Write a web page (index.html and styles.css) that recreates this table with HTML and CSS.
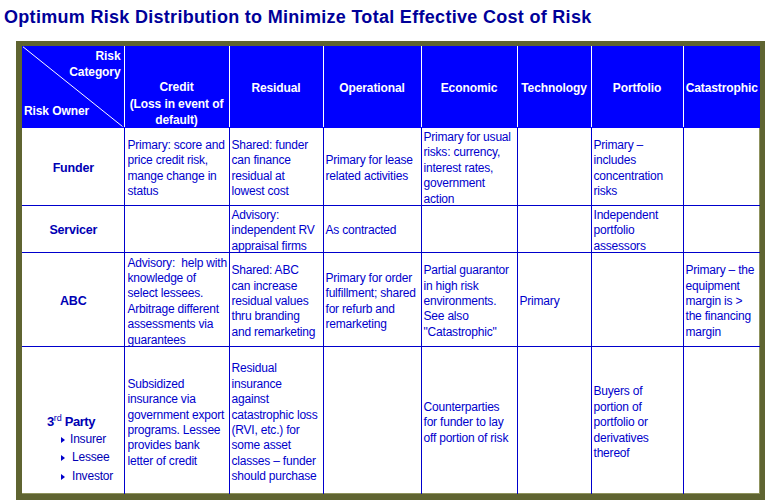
FILE: index.html
```html
<!DOCTYPE html>
<html>
<head>
<meta charset="utf-8">
<link rel="stylesheet" href="styles.css">
</head>
<body>
<h1 class="title">Optimum Risk Distribution to Minimize Total Effective Cost of Risk</h1>
<div class="frame">
<table class="grid">
<colgroup>
<col class="c0"><col class="c1"><col class="c2"><col class="c3"><col class="c4"><col class="c5"><col class="c6"><col class="c7">
</colgroup>
<tr class="r-head">
<th class="corner">
<svg class="diag" viewBox="0 0 100 100" preserveAspectRatio="none"><line x1="1" y1="1" x2="99" y2="100" stroke="#fff" stroke-width="1" vector-effect="non-scaling-stroke"/></svg>
<div class="corner-in">
<div class="cat">Risk<br>Category</div>
<div class="own">Risk Owner</div>
</div>
</th>
<th class="credit"><div class="ct">Credit<br>(Loss in event of<br>default)</div></th>
<th><div class="t">Residual</div></th>
<th><div class="t">Operational</div></th>
<th><div class="t">Economic</div></th>
<th><div class="t">Technology</div></th>
<th><div class="t">Portfolio</div></th>
<th><div class="t">Catastrophic</div></th>
</tr>
<tr class="r1">
<td class="owner"><div class="t">Funder</div></td>
<td><div class="t">Primary: score and<br>price credit risk,<br>mange change in<br>status</div></td>
<td><div class="t">Shared: funder<br>can finance<br>residual at<br>lowest cost</div></td>
<td><div class="t">Primary for lease<br>related activities</div></td>
<td><div class="t">Primary for usual<br>risks: currency,<br>interest rates,<br>government<br>action</div></td>
<td></td>
<td><div class="t">Primary –<br>includes<br>concentration<br>risks</div></td>
<td></td>
</tr>
<tr class="r2">
<td class="owner"><div class="t">Servicer</div></td>
<td></td>
<td><div class="t">Advisory:<br>independent RV<br>appraisal firms</div></td>
<td><div class="t">As contracted</div></td>
<td></td>
<td></td>
<td><div class="t">Independent<br>portfolio<br>assessors</div></td>
<td></td>
</tr>
<tr class="r3">
<td class="owner"><div class="t">ABC</div></td>
<td><div class="t">Advisory:&nbsp; help with<br>knowledge of<br>select lessees.<br>Arbitrage different<br>assessments via<br>guarantees</div></td>
<td><div class="t">Shared: ABC<br>can increase<br>residual values<br>thru branding<br>and remarketing</div></td>
<td><div class="t">Primary for order<br>fulfillment; shared<br>for refurb and<br>remarketing</div></td>
<td><div class="t">Partial guarantor<br>in high risk<br>environments.<br>See also<br>"Catastrophic"</div></td>
<td><div class="t">Primary</div></td>
<td></td>
<td><div class="t">Primary – the<br>equipment<br>margin is &gt;<br>the financing<br>margin</div></td>
</tr>
<tr class="r4">
<td class="owner third">
<div class="third-in">
<div class="party">3<sup>rd</sup> Party</div>
<ul class="kinds">
<li class="k1">Insurer</li>
<li class="k2">Lessee</li>
<li class="k3">Investor</li>
</ul>
</div>
</td>
<td><div class="t">Subsidized<br>insurance via<br>government export<br>programs. Lessee<br>provides bank<br>letter of credit</div></td>
<td><div class="t">Residual<br>insurance<br>against<br>catastrophic loss<br>(RVI, etc.) for<br>some asset<br>classes – funder<br>should purchase</div></td>
<td></td>
<td><div class="t">Counterparties<br>for funder to lay<br>off portion of risk</div></td>
<td></td>
<td><div class="t">Buyers of<br>portion of<br>portfolio or<br>derivatives<br>thereof</div></td>
<td></td>
</tr>
</table>
</div>
</body>
</html>
```

FILE: styles.css
```css
html, body {
  margin: 0;
  padding: 0;
  background: #ffffff;
}
body {
  font-family: "Liberation Sans", Arial, sans-serif;
}
.title {
  margin: 0;
  padding: 6px 0 0 4px;
  height: 29px;
  box-sizing: border-box;
  font-size: 18px;
  line-height: 22px;
  font-weight: bold;
  color: #000099;
  white-space: nowrap;
  letter-spacing: 0.3px;
}
.frame {
  margin: 12px 0 0 16px;
  width: 738px;
  border-style: solid;
  border-color: #5f6431;
  border-width: 5px 5px 6px 6px;
  box-shadow: inset -1px -1px 0 #8f935e;
}
.grid {
  width: 738px;
  table-layout: fixed;
  border-collapse: collapse;
  border-style: hidden;
  font-size: 12px;
  line-height: 15.4px;
}
.c0 { width: 102px; }
.c1 { width: 105px; }
.c2 { width: 94px; }
.c3 { width: 98px; }
.c4 { width: 96px; }
.c5 { width: 74px; }
.c6 { width: 92px; }
.c7 { width: 77px; }
.grid th {
  background: #0000ff;
  color: #ffffff;
  font-weight: bold;
  text-align: center;
  vertical-align: middle;
  border-left: 1px solid #ffffff;
  border-right: 1px solid #ffffff;
  border-bottom: 1px solid #0000ff;
  padding: 0;
  white-space: nowrap;
  letter-spacing: -0.1px;
}
.t {
  margin: 2.5px 0 -2.5px;
}
.grid th.credit {
  vertical-align: top;
}
.ct {
  margin: 33px 0 -33px;
  line-height: 16.5px;
}
.r-head { height: 81px; }
.r1 { height: 78px; }
.r2 { height: 47px; }
.r3 { height: 94px; }
.r4 { height: 148px; }
.grid td {
  border: 1px solid #0000cc;
  color: #0000cc;
  vertical-align: middle;
  padding: 0 1px 0 2px;
  white-space: nowrap;
  overflow: visible;
  letter-spacing: -0.2px;
}
.grid td:nth-child(2) { padding-left: 3px; }
.grid td.owner {
  text-align: center;
  font-weight: bold;
  color: #0000b4;
  font-size: 12.5px;
}
.corner {
  position: relative;
}
.diag {
  position: absolute;
  left: 0;
  top: 0;
  width: 100%;
  height: 100%;
  display: block;
}
.corner-in {
  position: relative;
  height: 80px;
  box-sizing: border-box;
  padding: 2px 3px 7px 2px;
  display: flex;
  flex-direction: column;
  justify-content: space-between;
  line-height: 16px;
}
.cat { text-align: right; }
.own { text-align: left; }
.grid td.third {
  vertical-align: bottom;
  text-align: left;
  padding: 0 0 9px 0;
}
.third-in {
  padding-left: 25px;
}
.party {
  font-size: 13px;
  font-weight: bold;
  letter-spacing: -0.5px;
  line-height: 16px;
}
.party sup {
  font-size: 9px;
  font-weight: normal;
  line-height: 0;
  vertical-align: 5px;
  letter-spacing: 0;
}
.kinds {
  list-style: none;
  margin: 0;
  padding: 0 0 0 14px;
  font-weight: normal;
  font-size: 12px;
}
.kinds li {
  position: relative;
  line-height: 18.5px;
  padding-left: 9px;
}
.kinds li.k2, .kinds li.k3 { padding-left: 11px; }
.kinds li::before {
  content: "";
  position: absolute;
  left: 0;
  top: 7px;
  border-style: solid;
  border-width: 3px 0 3px 4px;
  border-color: transparent transparent transparent #0000cc;
}
```
